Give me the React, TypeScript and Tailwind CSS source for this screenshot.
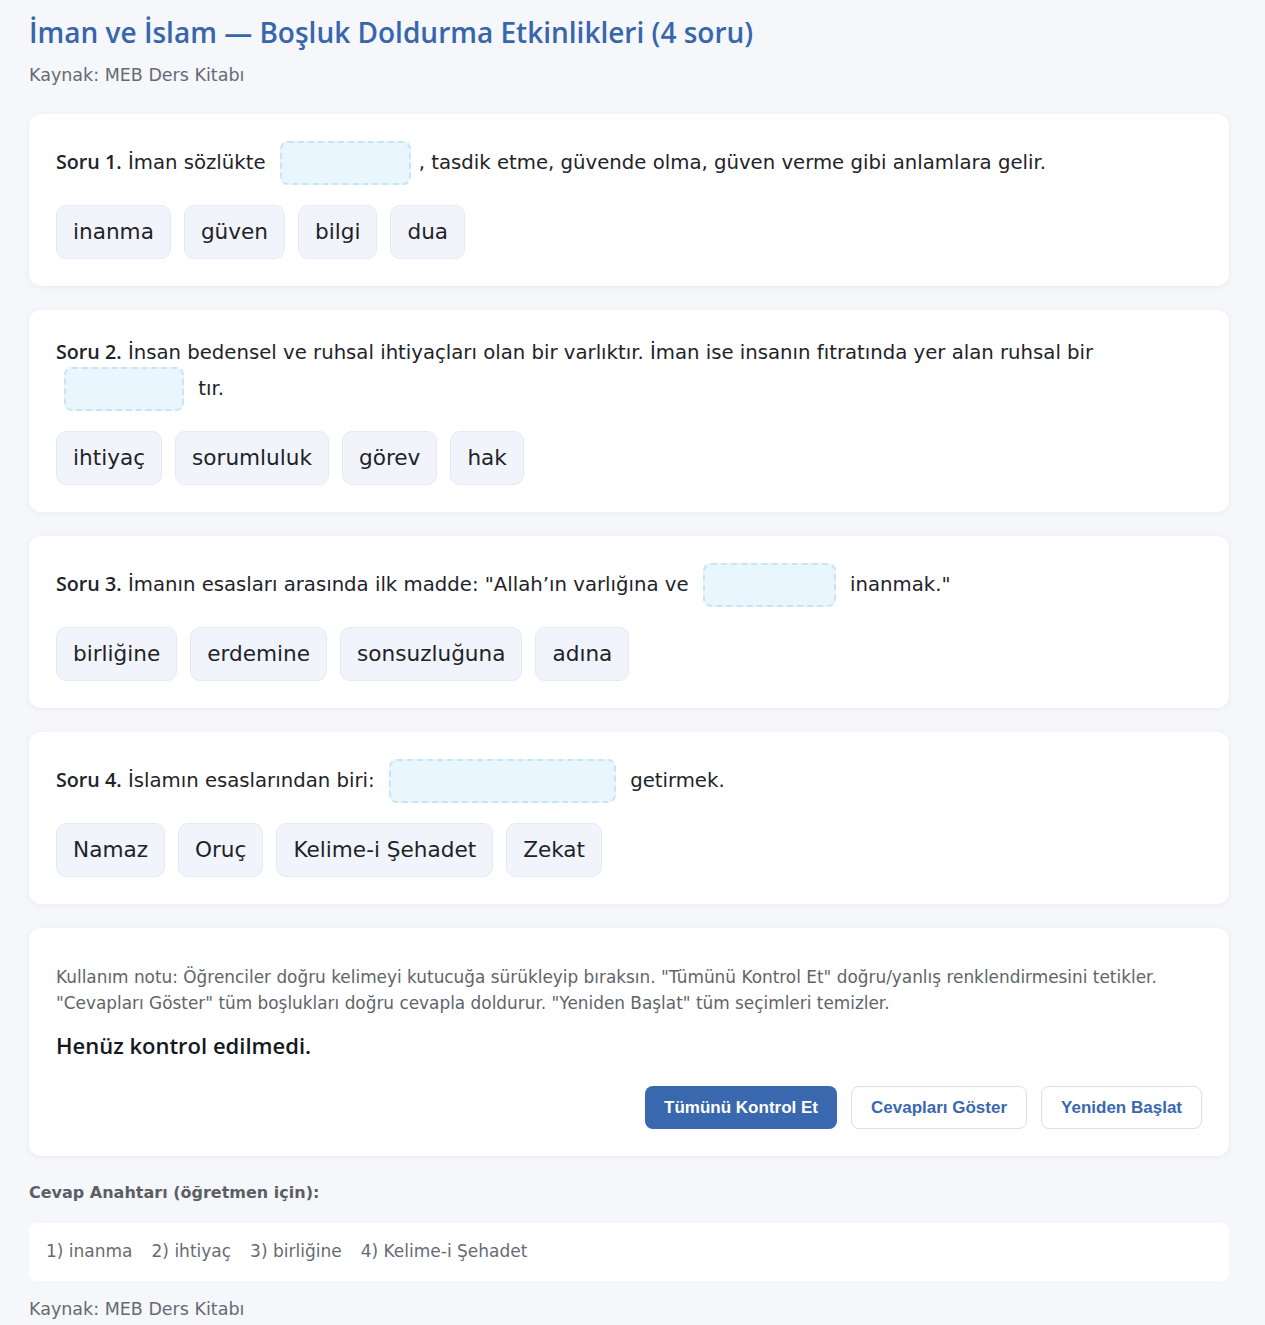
import React from "react";

type Question = {
  before: string;
  after: string;
  zone: string;
  breakBefore?: boolean;
  options: string[];
};

const questions: Question[] = [
  {
    before: "İman sözlükte",
    after: ", tasdik etme, güvende olma, güven verme gibi anlamlara gelir.",
    zone: "w-[131px]",
    options: ["inanma", "güven", "bilgi", "dua"],
  },
  {
    before:
      "İnsan bedensel ve ruhsal ihtiyaçları olan bir varlıktır. İman ise insanın fıtratında yer alan ruhsal bir",
    after: " tır.",
    zone: "w-[120px]",
    breakBefore: true,
    options: ["ihtiyaç", "sorumluluk", "görev", "hak"],
  },
  {
    before: "İmanın esasları arasında ilk madde: \"Allah’ın varlığına ve",
    after: " inanmak.\"",
    zone: "w-[133px]",
    options: ["birliğine", "erdemine", "sonsuzluğuna", "adına"],
  },
  {
    before: "İslamın esaslarından biri:",
    after: " getirmek.",
    zone: "w-[227px]",
    options: ["Namaz", "Oruç", "Kelime-i Şehadet", "Zekat"],
  },
];

const card = "bg-white rounded-xl shadow-[0_1px_6px_rgba(15,23,42,0.06)] p-[27px]";
const body = { fontFamily: '"DejaVu Sans", Verdana, sans-serif' };
const head = { fontFamily: '"Open Sans", "Noto Sans", sans-serif' };

function QuestionCard({ q, i }: { q: Question; i: number }) {
  return (
    <div className={card}>
      <p className="text-[19.7px] leading-[29px] text-[#1f2329]">
        <span className="font-semibold" style={head}>
          Soru {i + 1}.
        </span>{" "}
        {q.before}{" "}
        {q.breakBefore && <br />}
        <span
          className={`inline-block h-[44px] ${q.zone} mx-2 align-middle rounded-lg border-2 border-dashed border-[#c8e4f8] bg-[#eaf6fe]`}
        />
        {q.after}
      </p>
      <div className="mt-5 flex flex-wrap gap-[13px]">
        {q.options.map((o) => (
          <div
            key={o}
            className="h-[54px] px-4 flex items-center rounded-[10px] border border-[#e3eaf5] bg-[#f1f5fb] text-[21.6px] text-[#1f2329]"
          >
            {o}
          </div>
        ))}
      </div>
    </div>
  );
}

export default function App() {
  return (
    <div className="min-h-screen bg-[#f5f7fb] px-[29px] pt-[14px] pb-[8px]" style={body}>
      <div className="max-w-[1200px]">
        <h1 className="text-[28px] leading-[36px] font-semibold text-[#3866ad]" style={head}>
          İman ve İslam — Boşluk Doldurma Etkinlikleri (4 soru)
        </h1>
        <p className="mt-[12px] text-[17.5px] leading-[26px] text-[#666b73]">Kaynak: MEB Ders Kitabı</p>

        <div className="mt-[26px] flex flex-col gap-6">
          {questions.map((q, i) => (
            <QuestionCard key={i} q={q} i={i} />
          ))}

          <div className={card}>
            <p className="mt-[9px] text-[16.9px] leading-[26px] text-[#5f646b]">
              Kullanım notu: Öğrenciler doğru kelimeyi kutucuğa sürükleyip bıraksın. "Tümünü Kontrol Et"
              doğru/yanlış renklendirmesini tetikler. "Cevapları Göster" tüm boşlukları doğru cevapla
              doldurur. "Yeniden Başlat" tüm seçimleri temizler.
            </p>
            <p className="mt-[15px] text-[22px] leading-[28px] font-semibold text-[#15181c]" style={head}>
              Henüz kontrol edilmedi.
            </p>
            <div
              className="mt-[27px] flex justify-end gap-[14px] text-[17px] font-bold"
              style={{ fontFamily: '"Liberation Sans", Arial, sans-serif' }}
            >
              <button className="h-[43px] px-[19px] rounded-lg bg-[#3a68ae] text-white">
                Tümünü Kontrol Et
              </button>
              <button className="h-[43px] px-[19px] rounded-lg border border-[#d6e1f0] bg-white text-[#3a68ae]">
                Cevapları Göster
              </button>
              <button className="h-[43px] px-[19px] rounded-lg border border-[#d6e1f0] bg-white text-[#3a68ae]">
                Yeniden Başlat
              </button>
            </div>
          </div>
        </div>

        <p className="mt-[25px] text-[16px] leading-[24px] font-bold text-[#5a5f66]">
          Cevap Anahtarı (öğretmen için):
        </p>
        <div className="mt-[18px] bg-white rounded-lg px-[17px] h-[58px] flex items-center gap-[19px] text-[17px] text-[#666b73]">
          <span>1) inanma</span>
          <span>2) ihtiyaç</span>
          <span>3) birliğine</span>
          <span>4) Kelime-i Şehadet</span>
        </div>
        <p className="mt-[16px] text-[17.5px] leading-[24px] text-[#666b73]">Kaynak: MEB Ders Kitabı</p>
      </div>
    </div>
  );
}
